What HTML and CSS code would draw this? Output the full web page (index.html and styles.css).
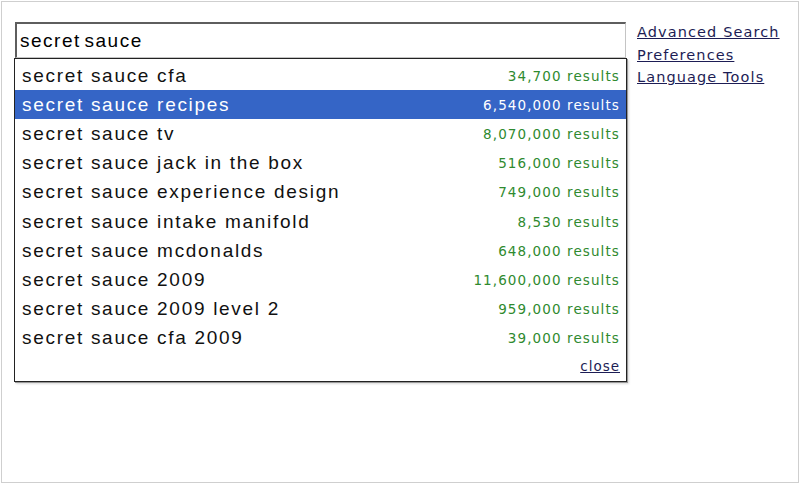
FILE: index.html
```html
<!DOCTYPE html>
<html lang="en">
<head>
    <meta charset="UTF-8">
    <title>secret sauce - Search</title>
    <link rel="stylesheet" href="styles.css">
</head>
<body>
    <div class="frame">
        <div class="search-area">
            <div class="query-col">
                <div class="query-box">secret sauce</div>
                <div class="suggest">
                    <div class="row"><span class="term">secret sauce cfa</span><span class="count">34,700 results</span></div>
                    <div class="row active"><span class="term">secret sauce recipes</span><span class="count">6,540,000 results</span></div>
                    <div class="row"><span class="term">secret sauce tv</span><span class="count">8,070,000 results</span></div>
                    <div class="row"><span class="term">secret sauce jack in the box</span><span class="count">516,000 results</span></div>
                    <div class="row"><span class="term">secret sauce experience design</span><span class="count">749,000 results</span></div>
                    <div class="row"><span class="term">secret sauce intake manifold</span><span class="count">8,530 results</span></div>
                    <div class="row"><span class="term">secret sauce mcdonalds</span><span class="count">648,000 results</span></div>
                    <div class="row"><span class="term">secret sauce 2009</span><span class="count">11,600,000 results</span></div>
                    <div class="row"><span class="term">secret sauce 2009 level 2</span><span class="count">959,000 results</span></div>
                    <div class="row"><span class="term">secret sauce cfa 2009</span><span class="count">39,000 results</span></div>
                    <div class="close-row"><a href="#" class="close">close</a></div>
                </div>
            </div>
            <div class="side-links">
                <a href="#">Advanced Search</a>
                <a href="#">Preferences</a>
                <a href="#">Language Tools</a>
            </div>
        </div>
    </div>
</body>
</html>
```

FILE: styles.css
```css
html, body {
    margin: 0;
    padding: 0;
    background: #fff;
}

body {
    font-family: 'Liberation Sans', Arial, sans-serif;
    color: #000;
}

.frame {
    box-sizing: border-box;
    width: 798px;
    height: 482px;
    margin: 1px;
    border: 1px solid #cfcfcf;
    padding: 20px 0 0 12px;
}

.search-area {
    display: flex;
    align-items: flex-start;
}

.query-col {
    width: 613px;
}

.query-box {
    box-sizing: border-box;
    width: 611px;
    height: 36px;
    margin-left: 1px;
    border-top: 2px solid #5e5e5e;
    border-left: 2px solid #5e5e5e;
    border-right: 1px solid #c4c4c4;
    border-bottom: 1px solid #c4c4c4;
    padding: 4px 0 0 3px;
    font-size: 19px;
    letter-spacing: 1.5px;
    word-spacing: -3px;
    line-height: 26px;
}

.suggest {
    box-sizing: border-box;
    width: 613px;
    border: 1px solid #222;
    box-shadow: 1px 1px 0 #999, 2px 2px 2px rgba(0, 0, 0, 0.15);
    padding-top: 2px;
    background: #fff;
}

.row {
    display: flex;
    justify-content: space-between;
    align-items: center;
    height: 29.2px;
    padding: 0 6px 0 7px;
}

.term {
    font-size: 19px;
    letter-spacing: 1.7px;
    color: #111;
}

.count {
    font-family: 'DejaVu Sans', Verdana, sans-serif;
    font-size: 13.5px;
    letter-spacing: 1.1px;
    color: #2f8a2f;
}

.row.active {
    background: #3565c6;
}

.row.active .term,
.row.active .count {
    color: #fff;
}

.close-row {
    height: 28px;
    padding: 0 6px;
    text-align: right;
    line-height: 26px;
}

.close {
    font-family: 'DejaVu Sans', Verdana, sans-serif;
    font-size: 13.5px;
    letter-spacing: 1px;
    color: #1d1d55;
}

.side-links {
    display: flex;
    flex-direction: column;
    margin-left: 10px;
    margin-top: -1px;
}

.side-links a {
    font-family: 'DejaVu Sans', Verdana, sans-serif;
    font-size: 14.5px;
    letter-spacing: 1.1px;
    line-height: 22.5px;
    color: #1d1d55;
}
```
